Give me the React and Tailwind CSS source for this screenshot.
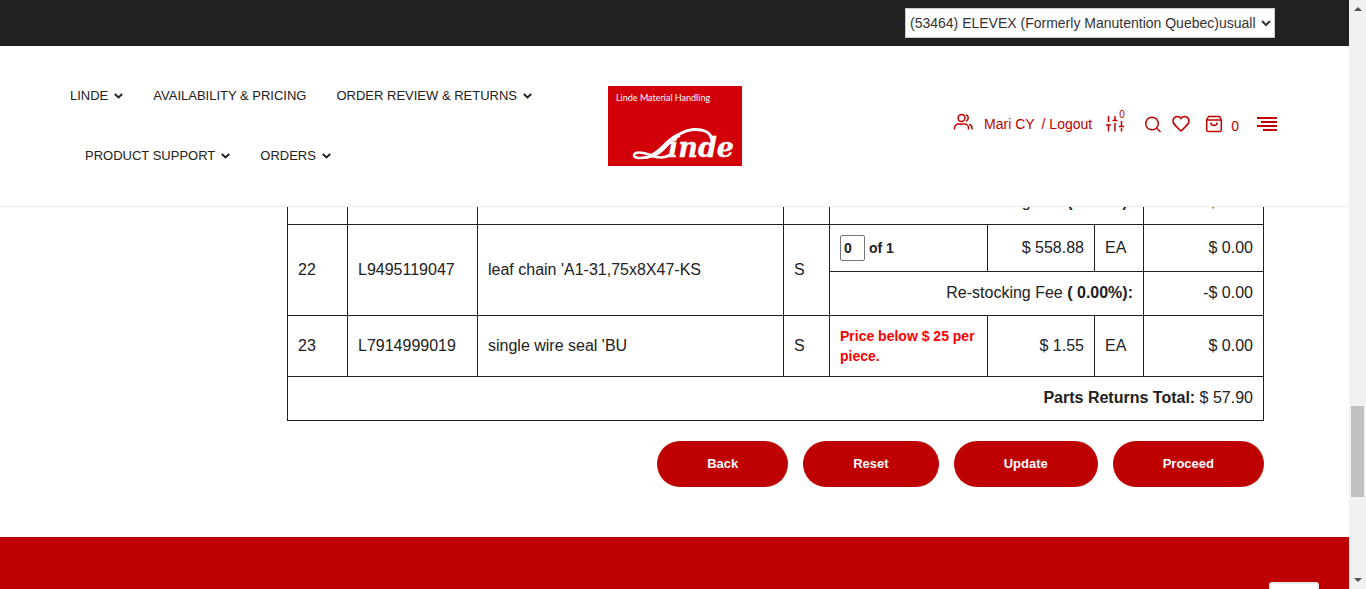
import React from "react";

const cell = "border border-[#212121] px-2.5";
const feeCell = `${cell} pb-0.5 text-right`;

function Caret() {
  return (
    <svg className="h-[6px] w-[9px]" viewBox="0 0 9 6" fill="none" stroke="currentColor" strokeWidth="2" aria-hidden="true">
      <path d="M0.8 1 L4.5 4.4 L8.2 1" />
    </svg>
  );
}

function NavItem({ label, menu }) {
  return (
    <a href="#" className="flex h-[60px] items-center gap-1.5 whitespace-nowrap px-[15px]">
      {label}
      {menu && <Caret />}
    </a>
  );
}

function Logo() {
  return (
    <a href="#" aria-label="Linde Material Handling" className="block shrink-0">
      <svg className="h-20 w-[134px]" viewBox="0 0 134 80">
        <rect width="134" height="80" fill="#d20009" />
        <text x="8" y="15" fill="#fff" fontSize="9" fontFamily="Lato, sans-serif">Linde Material Handling</text>
        <text x="60" y="71" fill="#fff" stroke="#fff" strokeWidth="0.3" fontSize="27" fontWeight="700" fontStyle="italic" fontFamily="'DejaVu Serif', serif">inde</text>
        <path d="M104 54 C103 46 95 43 85 43.500 C74 44.500 67 50 60 58 C53 66 48 70 38 71.500" fill="none" stroke="#fff" strokeWidth="3" />
        <path d="M72 49 C61 51 56 64 43 70" fill="none" stroke="#fff" strokeWidth="4" />
        <path d="M42 70.500 C30 73.500 26 71.500 26 69 C27 65.500 35 66 42 69 C49 72 55 73 62 69" fill="none" stroke="#fff" strokeWidth="2.6" />
      </svg>
    </a>
  );
}

const stroke = { fill: "none", stroke: "currentColor", strokeWidth: 1.5, "aria-hidden": true };

function Tools() {
  return (
    <div className="flex h-6 items-center whitespace-nowrap text-sm text-[#bf0000]">
      <a href="#" className="flex items-center gap-[11px]">
        <svg className="mb-1 h-5 w-5" viewBox="0 0 20 20" {...stroke}>
          <circle cx="8.5" cy="6" r="3.4" />
          <path d="M1.500 17.500V16a4 4 0 0 1 4-4h6a4 4 0 0 1 4 4v1.500M13 2.800a3.400 3.400 0 0 1 0 6.400M16.200 12.200a4 4 0 0 1 2.800 3.800v1.500" />
        </svg>
        Mari CY
      </a>
      <a href="#" className="ml-[7px]">/ Logout</a>
      <a href="#" aria-label="Compare" className="relative ml-[13px]">
        <svg className="h-5 w-5" viewBox="0 0 20 20" {...stroke}>
          <path d="M3.500 2v6M3.500 11v6.500M10 2v4.500M10 9v8.500M16.500 7v5M16.500 14v3.500M1 11h5M7.500 6.500h5M14 12.500h5" />
        </svg>
        <span className="absolute -top-[7px] left-[14px] text-[10px] leading-4">0</span>
      </a>
      <a href="#" aria-label="Search" className="ml-[19px]">
        <svg className="h-[18px] w-[18px]" viewBox="0 0 18 18" {...stroke}>
          <circle cx="8" cy="8.500" r="6.300" />
          <path d="M12.500 13l4 4" />
        </svg>
      </a>
      <a href="#" aria-label="Wish list" className="ml-[10px]">
        <svg className="h-[18px] w-[18px]" viewBox="0 0 18 18" {...stroke}>
          <path d="M9 3.700C6.500 0 1 1.500 1 6.300C1 8.500 2.500 10 9 16C15.500 10 17 8.500 17 6.300C17 1.500 11.500 0 9 3.700Z" />
        </svg>
      </a>
      <a href="#" aria-label="Cart" className="ml-[15px] flex items-center gap-2">
        <svg className="h-[18px] w-[18px]" viewBox="0 0 18 18" {...stroke}>
          <path d="M1.700 5L3.500 1.500h11L16.300 5v10a1.500 1.500 0 0 1-1.500 1.500H3.200A1.500 1.500 0 0 1 1.700 15ZM1.700 5h14.600M5.800 7.500a3.200 3 0 0 0 6.400 0" />
        </svg>
        <span className="pt-1">0</span>
      </a>
      <button type="button" aria-label="Menu" className="ml-[18px]">
        <svg className="h-[14px] w-5" viewBox="0 0 20 14" fill="currentColor">
          <path d="M0 0h20v2H0zM4 4h16v2H4zM0 8h20v2H0zM6 12h14v2H6z" />
        </svg>
      </button>
    </div>
  );
}

function PartCells({ no, part, name, rows }) {
  return (
    <>
      <td rowSpan={rows} className={cell}>{no}</td>
      <td rowSpan={rows} className={cell}>{part}</td>
      <td rowSpan={rows} className={cell}>{name}</td>
      <td rowSpan={rows} className={cell}>S</td>
    </>
  );
}

function FeeCells() {
  return (
    <>
      <td colSpan={3} className={feeCell}>Re-stocking Fee <b>( 0.00%):</b></td>
      <td className={feeCell}>-$ 0.00</td>
    </>
  );
}

function ReturnsTable() {
  return (
    <table className="w-full table-fixed border-collapse text-left text-base">
      <colgroup>
        <col className="w-[60px]" />
        <col className="w-[130px]" />
        <col />
        <col className="w-[46px]" />
        <col className="w-[158px]" />
        <col className="w-[107px]" />
        <col className="w-[49px]" />
        <col className="w-[120px]" />
      </colgroup>
      <tbody>
        <tr className="h-11">
          <td className={cell} />
          <td className={cell} />
          <td className={cell} />
          <td className={cell} />
          <FeeCells />
        </tr>
        <tr className="h-[47px]">
          <PartCells no="22" part="L9495119047" name="leaf chain 'A1-31,75x8X47-KS" rows={2} />
          <td className={cell}>
            <label className="flex items-center gap-1 text-sm font-bold">
              <input defaultValue="0" className="h-[26px] w-[25px] rounded-xs border border-[#767676] px-[3px]" />
              of 1
            </label>
          </td>
          <td className={`${cell} text-right`}>$ 558.88</td>
          <td className={cell}>EA</td>
          <td className={`${cell} text-right`}>$ 0.00</td>
        </tr>
        <tr className="h-11">
          <FeeCells />
        </tr>
        <tr className="h-[61px]">
          <PartCells no="23" part="L7914999019" name="single wire seal 'BU" rows={1} />
          <td className={`${cell} text-sm leading-5 font-bold text-[#ff0000]`}>Price below $ 25 per piece.</td>
          <td className={`${cell} text-right`}>$ 1.55</td>
          <td className={cell}>EA</td>
          <td className={`${cell} text-right`}>$ 0.00</td>
        </tr>
        <tr className="h-11">
          <td colSpan={8} className={feeCell}><b>Parts Returns Total:</b> $ 57.90</td>
        </tr>
      </tbody>
    </table>
  );
}

function Action({ children }) {
  return (
    <button type="button" className="h-[46px] rounded-full bg-[#bf0000] px-[50px] text-[13px] font-bold text-white">{children}</button>
  );
}

export default function App() {
  return (
    <div className="flex h-screen overflow-hidden bg-white font-['Liberation_Sans',Arial,sans-serif] text-[#212121]">
      <div className="flex min-w-0 grow flex-col">
        <header className="z-10 shrink-0 border-b border-[#ebebeb] bg-white">
          <div className="flex h-[46px] items-center justify-end bg-[#212121] pr-[74px]">
            <select aria-label="Account" className="h-[30px] w-[370px] border border-[#ccc] bg-white text-sm text-[#333]">
              <option>(53464) ELEVEX (Formerly Manutention Quebec)usuall</option>
            </select>
          </div>
          <div className="flex h-40 items-center pr-[72px] pl-[70px]">
            <nav className="flex w-[538px] shrink-0 flex-wrap text-[13px]">
              <div className="-ml-[15px] flex">
                <NavItem label="LINDE" menu />
                <NavItem label="AVAILABILITY & PRICING" />
                <NavItem label="ORDER REVIEW & RETURNS" menu />
              </div>
              <NavItem label="PRODUCT SUPPORT" menu />
              <NavItem label="ORDERS" menu />
            </nav>
            <Logo />
            <div className="ml-auto pb-1"><Tools /></div>
          </div>
        </header>
        <main className="-mt-[27px] grow pr-[85px] pl-[287px]">
          <ReturnsTable />
          <div className="mt-5 flex justify-end gap-[15px]">
            <Action>Back</Action>
            <Action>Reset</Action>
            <Action>Update</Action>
            <Action>Proceed</Action>
          </div>
        </main>
        <footer className="flex h-[52px] shrink-0 items-end justify-end bg-[#bf0000] pr-[30px]">
          <a href="#" aria-label="Back to top" className="h-[7px] w-[50px] rounded-t-[3px] border-2 border-b-0 border-[#ebebeb] bg-white" />
        </footer>
      </div>
      <div className="flex w-[17px] shrink-0 flex-col items-center bg-[#f1f1f1]" aria-hidden="true">
        <svg className="h-[17px] w-[17px] shrink-0" viewBox="0 0 17 17"><path d="M5 11l4-4 4 4z" fill="#505050" /></svg>
        <div className="grow-[389]" />
        <div className="w-[13px] grow-[91] bg-[#c1c1c1]" />
        <div className="grow-[75]" />
        <svg className="h-[17px] w-[17px] shrink-0" viewBox="0 0 17 17"><path d="M5 6l4 4 4-4z" fill="#505050" /></svg>
      </div>
    </div>
  );
}
